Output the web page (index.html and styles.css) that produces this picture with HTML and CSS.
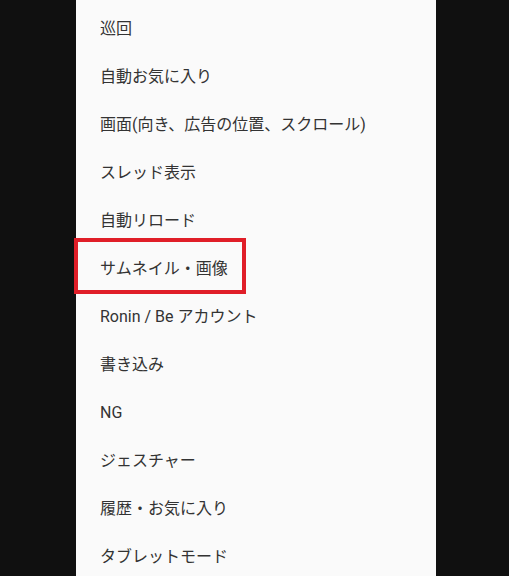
FILE: index.html
```html
<!DOCTYPE html>
<html lang="ja">
<head>
  <meta charset="UTF-8" />
  <title>設定</title>
  <link rel="stylesheet" href="styles.css">
</head>
<body>
  <!-- Settings list panel -->
  <div class="panel">
    <ul class="menu">
      <li class="item">巡回</li>
      <li class="item">自動お気に入り</li>
      <li class="item">画面(向き、広告の位置、スクロール)</li>
      <li class="item">スレッド表示</li>
      <li class="item">自動リロード</li>
      <li class="item marked">サムネイル・画像<span class="highlight"></span></li>
      <li class="item">Ronin / Be アカウント</li>
      <li class="item">書き込み</li>
      <li class="item">NG</li>
      <li class="item">ジェスチャー</li>
      <li class="item">履歴・お気に入り</li>
      <li class="item">タブレットモード</li>
    </ul>
  </div>
</body>
</html>
```

FILE: styles.css
```css
/* Reset and dark backdrop */
html, body {
  margin: 0;
  padding: 0;
  height: 100%;
  overflow: hidden;
}

body {
  background-color: #101010;
  font-family: Roboto, "Noto Sans CJK JP", sans-serif;
}

/* White settings panel */
.panel {
  margin-left: 76px;
  width: 360px;
  height: 100%;
  background-color: #fafafa;
}

/* List of settings */
.menu {
  list-style: none;
  margin: 0;
  padding: 5px 0 0 0;
}

.item {
  position: relative;
  height: 48px;
  line-height: 48px;
  padding-left: 24px;
  font-size: 16px;
  color: #333333;
}

/* Red callout box around one entry */
.highlight {
  position: absolute;
  top: -7px;
  left: -2px;
  width: 164px;
  height: 48px;
  border: 4px solid #e01e28;
}
```
